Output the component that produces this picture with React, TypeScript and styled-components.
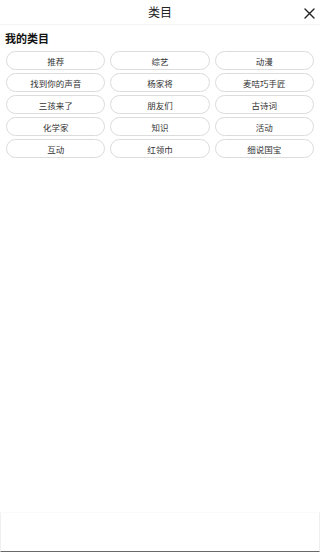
import styled, { createGlobalStyle } from "styled-components";

const GlobalStyle = createGlobalStyle`
  html, body {
    margin: 0;
    padding: 0;
    background: #ffffff;
  }
  body {
    font-family: "Noto Sans CJK SC", "Noto Sans", sans-serif;
    color: #222;
  }
`;

const Page = styled.div`
  display: flex;
  flex-direction: column;
  height: 552px;
  background: #fff;
`;

const TitleBar = styled.header`
  position: relative;
  height: 25px;
  display: flex;
  align-items: center;
  justify-content: center;
  border-bottom: 1px solid #f4f4f4;
  box-sizing: border-box;
`;

const Title = styled.h1`
  margin: 0;
  font-size: 12px;
  font-weight: 400;
  color: #222;
  line-height: 1;
`;

const CloseButton = styled.button`
  position: absolute;
  right: 4px;
  top: 6px;
  width: 14px;
  height: 14px;
  padding: 0;
  border: none;
  background: none;
  display: flex;
  align-items: center;
  justify-content: center;
`;

const Section = styled.section`
  padding: 6px 6px 0;
  flex: 1;
`;

const SectionTitle = styled.h2`
  margin: 0 0 6px -1px;
  font-size: 11px;
  font-weight: 700;
  color: #111;
  line-height: 14px;
`;

const ChipGrid = styled.div`
  display: grid;
  grid-template-columns: repeat(3, 1fr);
  column-gap: 5px;
  row-gap: 3px;
`;

const Chip = styled.div`
  height: 19px;
  box-sizing: border-box;
  border: 1px solid #dcdcdc;
  border-radius: 10px;
  display: flex;
  align-items: center;
  justify-content: center;
  font-size: 8.5px;
  color: #333;
`;

const Footer = styled.footer`
  height: 40px;
  box-sizing: border-box;
  border-left: 1px solid #f0f0f0;
  border-right: 1px solid #eeeeee;
  border-top: 1px solid #fafafa;
  border-bottom: 1px solid #6a6a6a;
`;

const categories = [
  "推荐",
  "综艺",
  "动漫",
  "找到你的声音",
  "杨家将",
  "麦咭巧手匠",
  "三孩来了",
  "朋友们",
  "古诗词",
  "化学家",
  "知识",
  "活动",
  "互动",
  "红领巾",
  "细说国宝",
];

export default function App() {
  return (
    <>
      <GlobalStyle />
      <Page>
        <TitleBar>
          <Title>类目</Title>
          <CloseButton aria-label="关闭">
            <svg width="11" height="11" viewBox="0 0 11 11">
              <path
                d="M1 1 L10 10 M10 1 L1 10"
                stroke="#222"
                strokeWidth="1.4"
                strokeLinecap="round"
              />
            </svg>
          </CloseButton>
        </TitleBar>
        <Section>
          <SectionTitle>我的类目</SectionTitle>
          <ChipGrid>
            {categories.map((c) => (
              <Chip key={c}>{c}</Chip>
            ))}
          </ChipGrid>
        </Section>
        <Footer />
      </Page>
    </>
  );
}
